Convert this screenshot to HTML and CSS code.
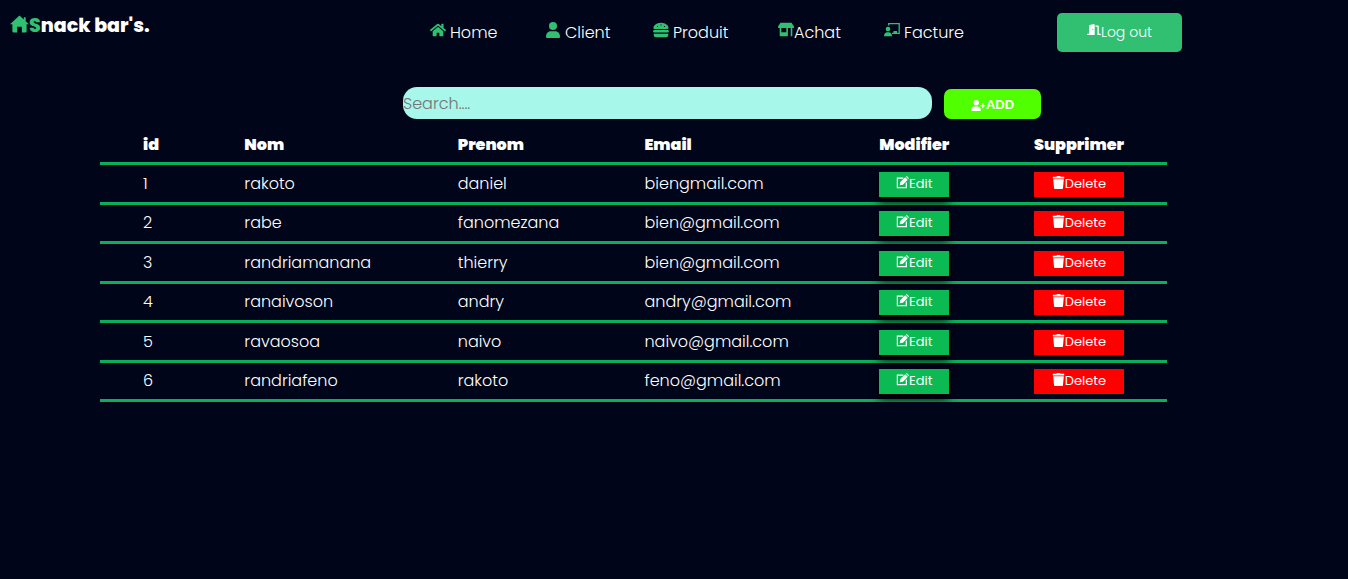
FILE: index.html
```html
<!DOCTYPE html>
<html lang="fr">
<head>
<meta charset="utf-8">
<meta name="viewport" content="width=device-width, initial-scale=1">
<title>Snack bar's</title>
<link rel="stylesheet" href="styles.css">
</head>
<body>
<svg class="sprite" aria-hidden="true">
  <symbol id="edit" viewBox="0 0 16 16"><path d="M9 2.500H1.700v11.800h11V8" fill="none" stroke="currentColor" stroke-width="1.500"/><path d="M4.500 11.500l.8-4 6-6 3.200 3.200-6 6zM12.300 1l1-1 2.700 2.700-1 1z"/></symbol>
  <symbol id="trash" viewBox="0 0 16 16"><path d="M1 1h4.500l.5-1h4l.5 1H15v2H1zM1.500 4h13l-1 11a1 1 0 0 1-1 1h-9a1 1 0 0 1-1-1z"/></symbol>
</svg>
<header class="topbar">
  <a class="brand" href="#"><svg class="brand-icon" viewBox="0 0 20 18" aria-hidden="true"><path d="M10 0 0 9.300h2.500V16.500a1.500 1.500 0 0 0 1.500 1.500h3.500v-6h5v6H16a1.500 1.500 0 0 0 1.500-1.500V9.300H20L16.500 6V2h-2v2.200z"/></svg><span class="initial">S</span>nack bar's.</a>
  <nav class="menu">
    <a class="link spaced" href="#"><svg class="icon" viewBox="0 0 576 512" aria-hidden="true"><path d="M280.370 148.260L96 300.110V464a16 16 0 0 0 16 16l112-.3a16 16 0 0 0 16-16V368a16 16 0 0 1 16-16h64a16 16 0 0 1 16 16v95.700a16 16 0 0 0 16 16L464 480a16 16 0 0 0 16-16V300L295.670 148.260a12 12 0 0 0-15.300 0zM571.600 251.470L488 182.560V44a12 12 0 0 0-12-12h-56a12 12 0 0 0-12 12v72.600L318.470 43a48 48 0 0 0-61 0L4.340 251.470a12 12 0 0 0-1.600 16.900l25.500 31A12 12 0 0 0 45.150 301l235.220-193.740a12 12 0 0 1 15.300 0L530.900 301a12 12 0 0 0 16.900-1.600l25.500-31a12 12 0 0 0-1.700-16.930z"/></svg>Home</a>
    <a class="link spaced" href="#"><svg class="icon person" viewBox="0 0 14 16" aria-hidden="true"><circle cx="7" cy="4" r="4"/><path d="M0 14.500C0 11 2.500 9.300 5 9.300h4c2.500 0 5 1.700 5 5.200 0 1-.5 1.500-1.500 1.500h-11C.5 16 0 15.500 0 14.500z"/></svg>Client</a>
    <a class="link spaced" href="#"><svg class="icon" viewBox="0 0 16 16" aria-hidden="true"><path d="M.5 6.200C0 4 3 .8 8 .8s8 3.200 7.500 5.400c-.1.500-.5.800-1 .8h-13c-.5 0-.9-.3-1-.8zM1.300 8h13.400a1.200 1.200 0 0 1 0 2.500H1.300a1.200 1.200 0 0 1 0-2.500zM.7 11.700h14.600V13a2.300 2.300 0 0 1-2.300 2.300H3A2.300 2.300 0 0 1 .7 13z"/><path class="seeds" d="M4 4.500h1M7.500 3h1M11 4.500h1"/></svg>Produit</a>
    <a class="link" href="#"><svg class="icon" viewBox="0 0 16 16" aria-hidden="true"><path d="M2.500.8h11L16 4.500c.3.900-.2 1.500-1 1.500H1c-.8 0-1.300-.6-1-1.500zM1.700 5.500h1.600v4.700h5V5.500h1.600v7.700c0 .7-.4 1.100-1.100 1.100h-6c-.7 0-1.100-.4-1.100-1.100zM12.700 5.500h1.600v8.800h-1.600z"/></svg>Achat</a>
    <a class="link spaced" href="#"><svg class="icon" viewBox="0 0 16 16" aria-hidden="true"><path d="M4.700 3.500V1.600h10.500v9.800H8" fill="none" stroke="currentColor" stroke-width="1.300"/><circle cx="4" cy="7" r="2.300"/><path d="M0 14.300c0-2.500 1.500-4 3.300-4h1.400c1.800 0 3.300 1.500 3.300 4zM9.500 9h3.500v2H9.500z"/></svg>Facture</a>
  </nav>
  <button class="logout" type="button"><svg class="door" viewBox="0 0 640 512" aria-hidden="true"><path d="M624 448h-80V113C544 86 522 64 496 64H384v64h96v384h144c9 0 16-7 16-16v-32c0-9-7-16-16-16zM312 1L120 51C106 54 96 68 96 83V448H16c-9 0-16 7-16 16v32c0 9 7 16 16 16h336V33c0-22-20-37-40-32zM264 288c-13 0-24-14-24-32s11-32 24-32 24 14 24 32-11 32-24 32z"/></svg>Log out</button>
</header>
<main>
  <form class="tools">
    <input class="search" type="search" placeholder="Search...." aria-label="Search">
    <button class="add" type="button"><svg class="add-icon" viewBox="0 0 16 12" aria-hidden="true"><circle cx="5.500" cy="3" r="3"/><path d="M0 12V10.500C0 8.300 1.600 7 3.500 7h3C8.500 7 10.500 8.300 10.500 10.500V12zM12 3.500h1.400v2h2.100v1.400h-2.100V9H12V6.900h-2V5.500h2z"/></svg>ADD</button>
  </form>
  <table class="clients">
    <colgroup><col class="c-id"><col class="c-nom"><col class="c-prenom"><col class="c-email"><col class="c-edit"><col class="c-delete"></colgroup>
    <thead><tr><th>id</th><th>Nom</th><th>Prenom</th><th>Email</th><th>Modifier</th><th>Supprimer</th></tr></thead>
    <tbody>
      <tr><td>1</td><td>rakoto</td><td>daniel</td><td>biengmail.com</td><td><button class="action edit" type="button"><svg class="glyph"><use href="#edit"/></svg>Edit</button></td><td><button class="action delete" type="button"><svg class="glyph"><use href="#trash"/></svg>Delete</button></td></tr>
      <tr><td>2</td><td>rabe</td><td>fanomezana</td><td>bien@gmail.com</td><td><button class="action edit" type="button"><svg class="glyph"><use href="#edit"/></svg>Edit</button></td><td><button class="action delete" type="button"><svg class="glyph"><use href="#trash"/></svg>Delete</button></td></tr>
      <tr><td>3</td><td>randriamanana</td><td>thierry</td><td>bien@gmail.com</td><td><button class="action edit" type="button"><svg class="glyph"><use href="#edit"/></svg>Edit</button></td><td><button class="action delete" type="button"><svg class="glyph"><use href="#trash"/></svg>Delete</button></td></tr>
      <tr><td>4</td><td>ranaivoson</td><td>andry</td><td>andry@gmail.com</td><td><button class="action edit" type="button"><svg class="glyph"><use href="#edit"/></svg>Edit</button></td><td><button class="action delete" type="button"><svg class="glyph"><use href="#trash"/></svg>Delete</button></td></tr>
      <tr><td>5</td><td>ravaosoa</td><td>naivo</td><td>naivo@gmail.com</td><td><button class="action edit" type="button"><svg class="glyph"><use href="#edit"/></svg>Edit</button></td><td><button class="action delete" type="button"><svg class="glyph"><use href="#trash"/></svg>Delete</button></td></tr>
      <tr><td>6</td><td>randriafeno</td><td>rakoto</td><td>feno@gmail.com</td><td><button class="action edit" type="button"><svg class="glyph"><use href="#edit"/></svg>Edit</button></td><td><button class="action delete" type="button"><svg class="glyph"><use href="#trash"/></svg>Delete</button></td></tr>
    </tbody>
  </table>
</main>
</body>
</html>
```
FILE: styles.css
```css
* { box-sizing: border-box; }
body {
  margin: 0;
  background: #00051a;
  color: #fff;
  font: 300 16px/24px Poppins, Inter, "Open Sans", sans-serif;
}
button, input { font-family: inherit; color: inherit; border: 0; padding: 0; }
button { cursor: pointer; }
svg { fill: currentColor; }
.sprite { display: none; }

.topbar {
  display: flex;
  align-items: flex-start;
  padding: 13px 166px 0 10px;
}
.brand {
  flex: 0 0 420px;
  display: flex;
  color: #fff;
  font-size: 19px;
  font-weight: 800;
  line-height: 26px;
  text-decoration: none;
  white-space: pre;
}
.brand-icon { width: 19px; height: 18px; margin-top: 2px; color: #31bf71; }
.initial { color: #31bf71; }
.menu {
  flex: 1;
  display: grid;
  grid-template-columns: 116fr 107fr 125fr 106fr 173fr;
  padding-top: 8px;
}
.link { display: flex; color: #fff; text-decoration: none; }
.icon { width: 16px; height: 16px; margin-top: 1px; color: #31bf71; }
.spaced .icon { margin-right: 4px; }
.spaced .person { width: 14px; margin-right: 5px; }
.seeds { stroke: #00051a; stroke-width: 1; }
.logout {
  display: flex;
  justify-content: center;
  width: 125px;
  padding: 8px 0;
  border-radius: 5px;
  background: #31bf71;
  font-size: 14px;
  font-weight: 300;
  line-height: 23px;
}
.door { width: 14px; height: 11px; margin-top: 3px; }

.tools {
  display: flex;
  align-items: flex-end;
  gap: 12px;
  padding: 35px 307px 0 403px;
}
.search {
  flex: 1;
  min-width: 0;
  height: 32px;
  border-radius: 14px;
  background: #a7f7eb;
  color: #222;
  font-size: 16px;
  font-weight: 300;
  appearance: none;
}
.search::placeholder { color: #757575; }
.add {
  display: flex;
  align-items: center;
  justify-content: center;
  width: 97px;
  height: 30px;
  border-radius: 7px;
  background: #50ff00;
  font-family: "Liberation Sans", Arial, sans-serif;
  font-size: 13px;
  font-weight: 700;
}
.add-icon { width: 15px; height: 11px; margin-top: 2px; }

.clients {
  width: calc(100% - 281px);
  margin: 6px 181px 0 100px;
  border-spacing: 0;
  table-layout: fixed;
}
.c-id { width: 9.5%; }
.c-nom { width: 20%; }
.c-prenom { width: 17.5%; }
.c-email { width: 22%; }
.c-edit { width: 14.5%; }
.c-delete { width: 16.5%; }
.clients th, .clients td {
  padding: 0 0 0 43px;
  border-bottom: 3px solid #0aaf5b;
  text-align: left;
  white-space: nowrap;
}
.clients th { height: 40px; padding-top: 2px; font-weight: 900; }
.clients td { height: 40px; }
.clients tr:nth-child(even) td { height: 39px; }
.action {
  display: flex;
  justify-content: center;
  height: 25px;
  margin-top: 1px;
  font-size: 13px;
  font-weight: 400;
  line-height: 24px;
}
.edit { width: 70px; background: #0cba54; box-shadow: 0 5px 10px #000; }
.delete { width: 90px; background: #f00; }
.glyph { width: 13px; height: 13px; margin-top: 4px; }
```
